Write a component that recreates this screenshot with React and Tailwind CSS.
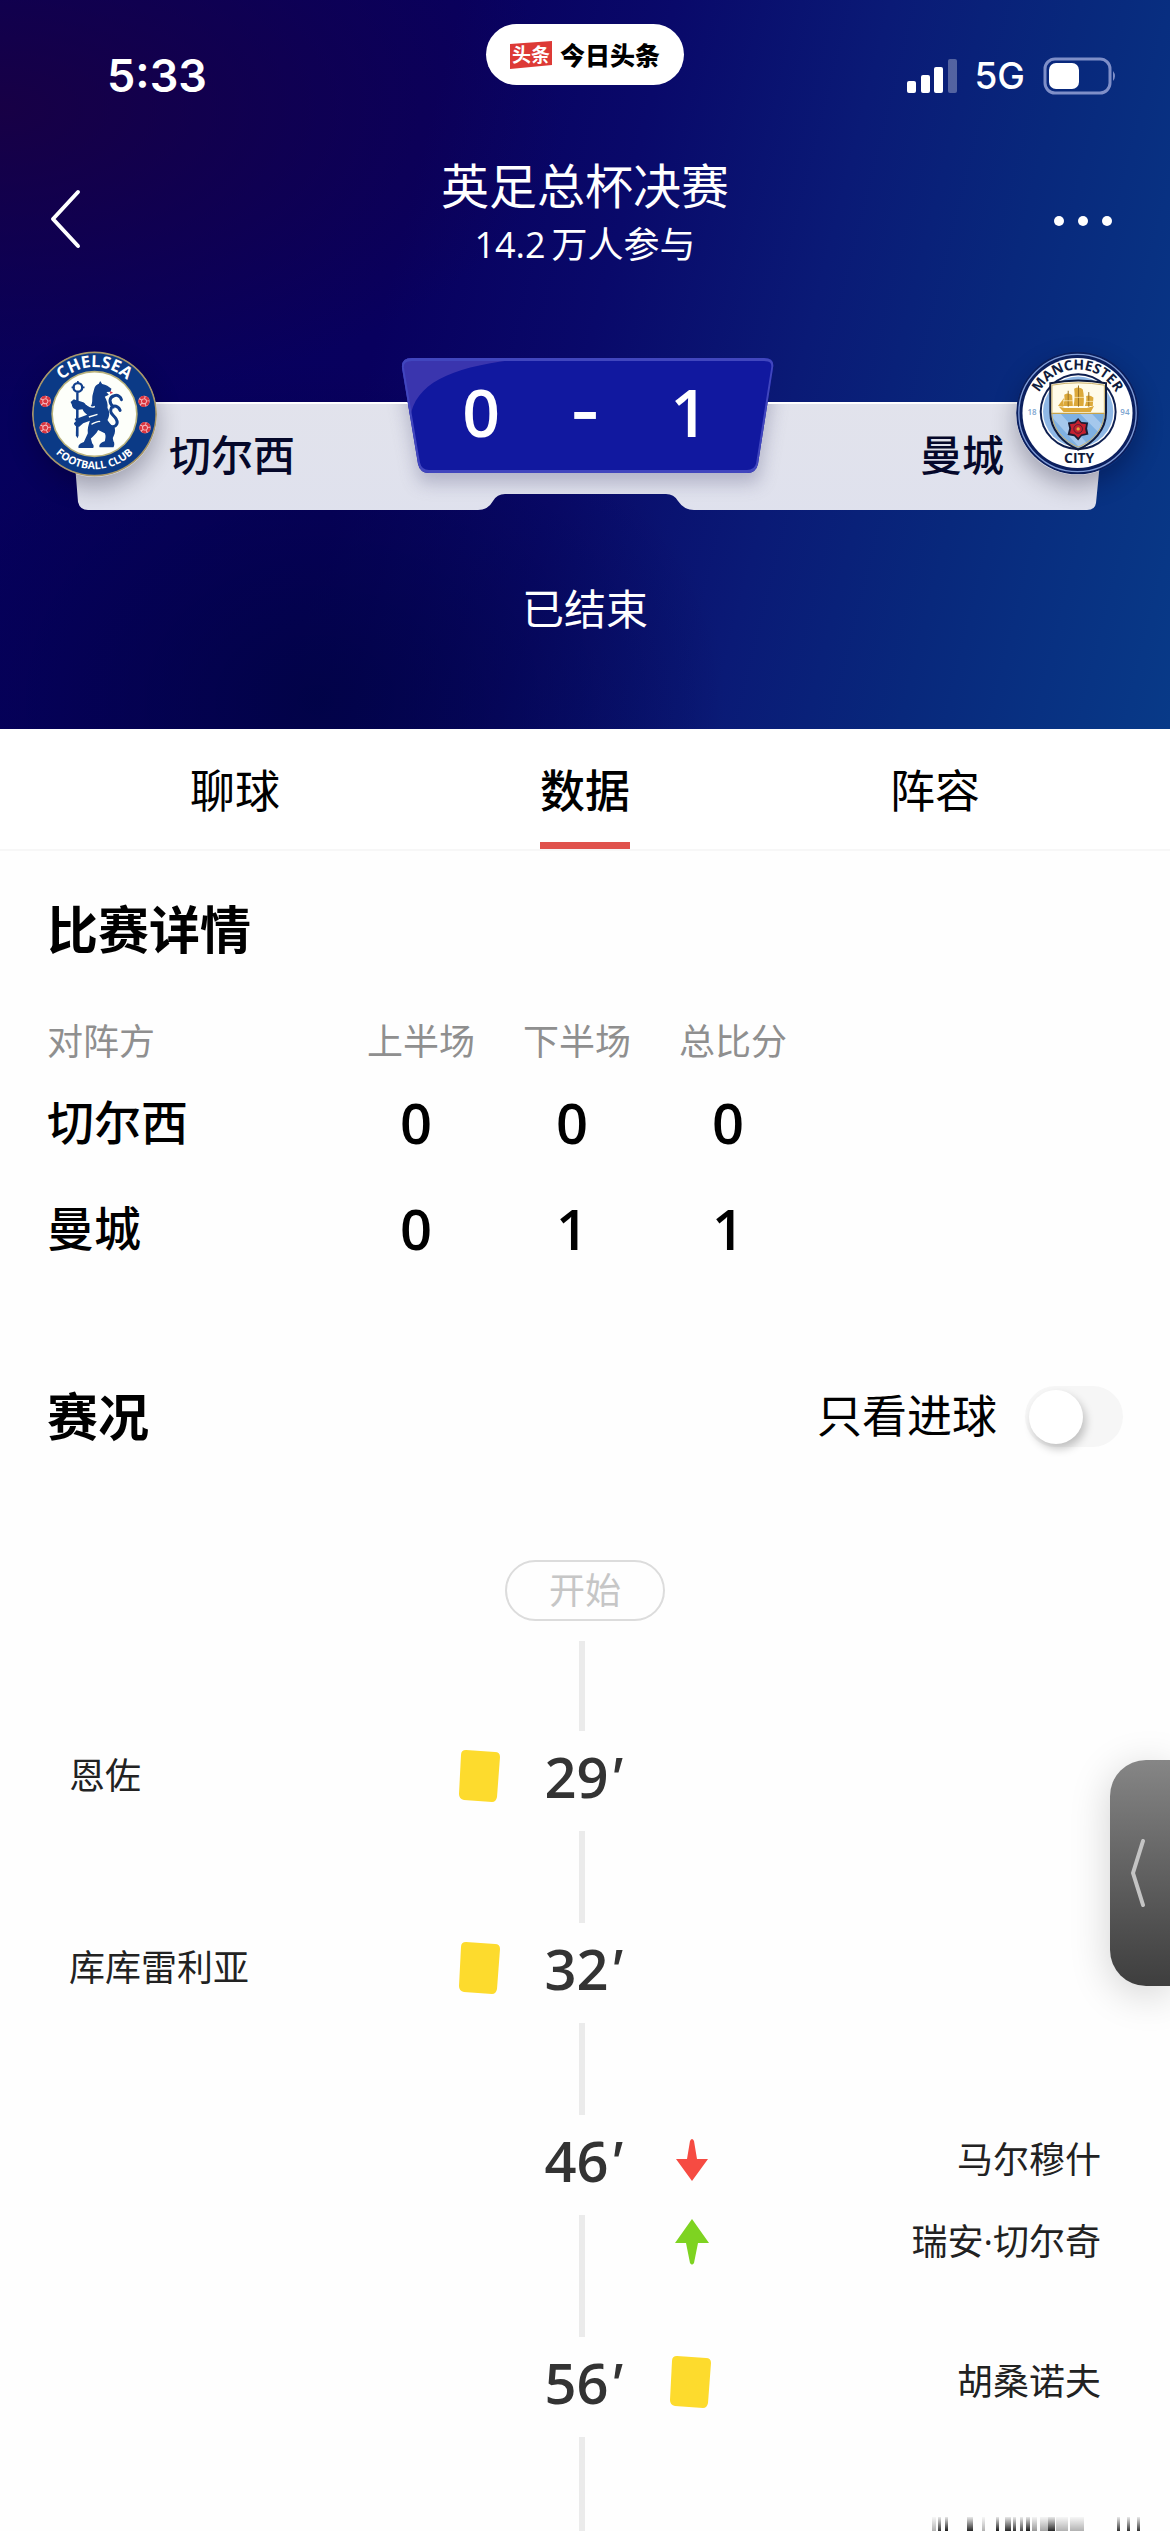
import { useState } from 'react';

const tabs = ['聊球', '数据', '阵容'];

const scores = [
  { team: '切尔西', first: 0, second: 0, total: 0 },
  { team: '曼城', first: 0, second: 1, total: 1 },
];

const events = [
  { minute: 29, side: 'home', players: [{ name: '恩佐', type: 'card' }], tail: 'h-[92px]' },
  { minute: 32, side: 'home', players: [{ name: '库库雷利亚', type: 'card' }], tail: 'h-[92px]' },
  {
    minute: 46,
    side: 'away',
    players: [
      { name: '马尔穆什', type: 'off' },
      { name: '瑞安·切尔奇', type: 'on' },
    ],
    tail: 'h-[122px]',
  },
  { minute: 56, side: 'away', players: [{ name: '胡桑诺夫', type: 'card' }], tail: 'h-[94px]' },
];

const ChelseaBadge = () => (
  <svg viewBox="35 28 376 378" className="w-[125px] h-[126px] rounded-full shadow-[0_10px_24px_rgba(0,0,30,0.3)]" role="img" aria-label="Chelsea">
    <defs>
      <path id="chelsea-top" d="M82 217a141 141 0 0 1 282 0" />
      <path id="chelsea-bottom" d="M57 217a166 166 0 0 0 332 0" />
    </defs>
    <circle cx="223" cy="217" r="188" fill="#a8976a" />
    <circle cx="223" cy="217" r="183" fill="#0b3a86" />
    <circle cx="223" cy="217" r="130" fill="#b9b27c" />
    <circle cx="223" cy="217" r="125" fill="#fdfffa" />
    <text fontFamily="Open Sans" fontWeight="700" fontSize="50" fill="#fff" textAnchor="middle">
      <textPath href="#chelsea-top" startOffset="50%">CHELSEA</textPath>
    </text>
    <text fontFamily="Open Sans" fontWeight="700" fontSize="32" fill="#fff" textAnchor="middle">
      <textPath href="#chelsea-bottom" startOffset="50%">FOOTBALL CLUB</textPath>
    </text>
    {[[75, 179], [75, 258], [372, 179], [375, 258]].map(([x, y]) => (
      <g key={`${x}-${y}`}>
        <circle cx={x} cy={y} r="17" fill="#f3b9bf" />
        <circle cx={x} cy={y} r="13" fill="none" stroke="#d9353f" strokeWidth="8" strokeDasharray="13 3" />
        <circle cx={x} cy={y} r="6" fill="#d9353f" />
      </g>
    ))}
    <g fill="#12408c">
      <path d="M168 152h7v130l-3 8-5-8z" />
      <path d="M222 142c2-10 8-14 14-16l4-8 6 9c12 2 20 8 28 14l-3 9-12 1 7 8-12 6c6 12 10 20 8 34 8 12 6 26 0 36 6 10 12 16 22 24 3 12-2 22-6 30l2 10c4 4 3 14 0 18h-42c-2-8 4-14 16-18 2-10 4-16 0-24l-20-10c-6 12-14 18-22 26l4 14c6 6 5 12 3 14h-44c-2-10 6-14 16-18l12-26c-2-14 2-24 6-38l-20 8-12 10c-8 2-14-2-16-10l6-6-4-8 12-2 26-10c-6-4-12-10-14-16l-16 2c-8-2-16-8-16-16l-4-8 10-8c14 6 30 6 36 16l12 6c10-8 6-24 8-34z" />
      <circle cx="173" cy="137" r="13" fill="none" stroke="#12408c" strokeWidth="7" />
      <path d="M173 118v9M154 137h9M183 137h10" stroke="#12408c" strokeWidth="5" />
      <path d="M262 250c24 14 34-4 26-18s-22-16-14-34c8-8 20-6 26 8M280 196c-16-14-12-30 2-34 12-4 20 4 22 12" fill="none" stroke="#12408c" strokeWidth="9" strokeLinecap="round" />
    </g>
    <path d="M202 190c8 6 16 8 22 4M206 226l26-8M214 248c10-4 20-12 26-8" stroke="#fdfffa" strokeWidth="4" fill="none" />
    <path d="M270 148l9 5-9 4z" fill="#dc3c50" />
  </svg>
);

const CityBadge = () => (
  <svg viewBox="31 36 370 374" className="w-[123px] h-[124px] rounded-full shadow-[0_10px_24px_rgba(0,0,30,0.3)]" role="img" aria-label="Manchester City">
    <defs>
      <path id="city-top" d="M85 223a131 131 0 0 1 262 0" />
      <clipPath id="city-shield">
        <path d="M134 133q84-16 168 0v88c0 54-40 94-84 112-44-18-84-58-84-112z" />
      </clipPath>
    </defs>
    <circle cx="216" cy="223" r="185" fill="#0b1f5e" />
    <circle cx="216" cy="223" r="177" fill="none" stroke="#7f9bd6" strokeWidth="4" />
    <circle cx="216" cy="223" r="166" fill="#fff" />
    <circle cx="218" cy="219" r="116" fill="#0e1f50" />
    <circle cx="218" cy="219" r="110" fill="#fff" />
    <circle cx="218" cy="219" r="106" fill="#8fb8e6" />
    <g clipPath="url(#city-shield)">
      <path fill="#fffbe9" d="M130 115h180v111H130z" />
      <path fill="#7fb1e2" d="M130 226h180v110H130z" />
      <path d="M130 226l100 110h34L166 226zM224 226l80 80v-34l-44-46z" fill="#a5c8ec" />
      <path d="M134 224h170" stroke="#c8a348" strokeWidth="4" />
    </g>
    <path d="M134 133q84-16 168 0v88c0 54-40 94-84 112-44-18-84-58-84-112z" fill="none" stroke="#101b3c" strokeWidth="6" />
    <path d="M139 139q79-14 158 0v82c0 50-38 88-79 105-41-17-79-55-79-105z" fill="none" stroke="#cdb06a" strokeWidth="3" />
    <g fill="#dca93a">
      <path d="M160 204l18 4h66l22-6-10 18h-82z" />
      <path d="M176 168c10-6 16-4 24 2l2 32h-30c4-10 6-20 4-34zM206 150c10-6 18-4 26 2 4 18 4 34 2 50h-30c4-18 4-34 2-52zM242 172c8-4 14-2 22 4l-2 26h-24c4-10 6-20 4-30z" />
      <path d="M157 202l18-24-2 26z" />
    </g>
    <path d="M188 156v48M219 140v64M250 160v44" stroke="#9a7424" strokeWidth="3" />
    <path d="M172 186h30M204 176h32M240 188h24" stroke="#fff3cf" strokeWidth="2" />
    <path d="M218 238l10 12 20 2-3 18 4 18-20 4-11 14-12-13-20-4 5-19-4-18 20-3z" fill="#1c1d33" />
    <path d="M218 244l9 11 15 2-3 14 3 13-15 4-9 10-10-10-15-4 4-14-4-13 16-2z" fill="#c4202f" />
    <circle cx="218" cy="271" r="13" fill="none" stroke="#1c1d33" strokeWidth="2" />
    <circle cx="218" cy="271" r="5" fill="#e4a23c" />
    <g fontFamily="Open Sans" fontWeight="700" fill="#101b3c" textAnchor="middle">
      <text fontSize="42">
        <textPath href="#city-top" startOffset="50%">MANCHESTER</textPath>
      </text>
      <text x="221" y="375" fontSize="42">CITY</text>
    </g>
    <g fontFamily="Open Sans" fontWeight="600" fontSize="24" fill="#7ba3cf" textAnchor="middle">
      <text x="79" y="228">18</text>
      <text x="359" y="228">94</text>
    </g>
  </svg>
);

const StatusBar = () => (
  <div className="grid grid-cols-3 items-start px-[61px] pt-6">
    <span className="pl-[46px] pt-6 text-[45px] leading-[56px] font-semibold font-['Inter',sans-serif]">5:33</span>
    <div className="flex h-[61px] w-[198px] items-center justify-center gap-2 justify-self-center rounded-full bg-white">
      <svg viewBox="0 0 42 28" className="h-7 w-[42px]">
        <path d="M0 3L42 0V24L0 28z" fill="#dd3a36" />
        <text x="21" y="21" fontSize="19" fontWeight="700" fill="#fff" textAnchor="middle" fontFamily="Noto Sans CJK SC">头条</text>
      </svg>
      <span className="text-[25px] leading-[28px] font-black text-black">今日头条</span>
    </div>
    <div className="-mr-2 flex items-center justify-end pt-[31px]">
      <svg viewBox="0 0 50 36" className="mr-[17px] h-9 w-[50px] fill-white">
        <rect x="0" y="23" width="9" height="12" rx="2" />
        <rect x="14" y="17" width="9" height="18" rx="2" />
        <rect x="27" y="9" width="9" height="26" rx="2" />
        <rect x="41" y="1" width="9" height="34" rx="2" opacity="0.3" />
      </svg>
      <span className="mr-[18px] text-[37px] leading-[42px] font-medium font-['Inter',sans-serif]">5G</span>
      <svg viewBox="0 0 74 38" className="h-[38px] w-[74px]">
        <rect x="2" y="2" width="65" height="34" rx="10" fill="none" stroke="#7f8fc8" strokeWidth="3" />
        <rect x="6" y="6" width="30" height="26" rx="7" fill="#fff" />
        <path d="M70 14q4 5 0 10z" fill="#7f8fc8" />
      </svg>
    </div>
  </div>
);

const ScoreBoard = () => (
  <div className="relative mt-[75px] h-[170px]">
    <svg viewBox="0 0 1170 170" preserveAspectRatio="none" className="absolute inset-0 h-full w-full" aria-hidden="true">
      <defs>
        <linearGradient id="board" x1="0" y1="0" x2="0" y2="1">
          <stop offset="0" stopColor="#e2e3ec" />
          <stop offset="1" stopColor="#dfe1ed" />
        </linearGradient>
        <filter id="soft" x="-20%" y="-20%" width="140%" height="160%">
          <feGaussianBlur stdDeviation="9" />
        </filter>
        <clipPath id="board-clip">
          <path d="M70 55H1106L1096 156q-1 7-9 7H694q-10 0-16-9-4-7-12-7H505q-8 0-12 7-5 9-15 9H88q-8 0-10-8z" />
        </clipPath>
        <clipPath id="score-clip">
          <path d="M412 11H764q11 0 9 10L758 117q-2 9-11 9H429q-9 0-11-9L402 21q-1-10 10-10z" />
        </clipPath>
      </defs>
      <g clipPath="url(#board-clip)">
        <path fill="url(#board)" d="M60 50h1056v120H60z" />
        <path d="M400 30H776L758 136H420z" fill="#6a6c90" opacity="0.4" filter="url(#soft)" />
        <path d="M70 56H1106" stroke="#fff" strokeWidth="2" />
      </g>
      <g clipPath="url(#score-clip)">
        <path fill="#11189f" d="M400 11h376v116H400z" />
        <path d="M400 11H530C460 18 415 32 410 72z" fill="#3a35ae" />
        <path d="M412 12H764q11 0 9 10L758 117q-2 8-11 8H429q-9 0-11-9L402 21q-1-9 10-9z" fill="none" stroke="#4146be" strokeWidth="4" />
      </g>
    </svg>
    <div className="relative flex items-start justify-between pt-1 pr-[31px] pl-8">
      <div className="flex">
        <ChelseaBadge />
        <span className="ml-3 pt-[78px] text-[42px] leading-[52px] font-medium text-[#05082a]">切尔西</span>
      </div>
      <div className="flex">
        <span className="mr-3 pt-[78px] text-[42px] leading-[52px] font-medium text-[#05082a]">曼城</span>
        <CityBadge />
      </div>
    </div>
    <div className="absolute inset-x-0 top-6 grid grid-cols-[104px_104px_104px] justify-center text-center font-['Open_Sans',sans-serif] text-[66px] leading-[80px] font-semibold">
      <span>0</span>
      <span className="font-['Inter',sans-serif]">-</span>
      <span>1</span>
    </div>
  </div>
);

const EventIcon = ({ type }) => {
  if (type === 'card') {
    return (
      <svg viewBox="0 0 41 54" className="h-[54px] w-[41px] shrink-0" aria-label="黄牌">
        <path d="M7 1L36 3q5 0 5 5L38 48q-1 5-5 5L5 51q-5-1-5-6L2 6q0-5 5-5z" fill="#fddb2d" />
      </svg>
    );
  }
  return (
    <svg viewBox="0 0 41 46" className="h-[46px] w-[41px] shrink-0" aria-label={type === 'on' ? '换上' : '换下'}>
      {type === 'on' ? (
        <path d="M22 0L39 24H28L24 44q-2 3-4 0L16 24H5z" fill="#7ed321" />
      ) : (
        <path d="M20 4q2-4 4 0l3 18h11L22 44 6 22h11z" fill="#f64b42" />
      )}
    </svg>
  );
};

const Player = ({ player, side }) => (
  <div className={`flex w-full items-center justify-between ${side === 'home' ? 'col-start-1' : 'col-start-3 flex-row-reverse'}`}>
    <span className="text-[36px] leading-[54px] text-[#222]">{player.name}</span>
    <EventIcon type={player.type} />
  </div>
);

const TimelineEvent = ({ event }) => {
  const [main, extra] = event.players;
  return (
    <li>
      <div className="grid h-[100px] grid-cols-[1fr_170px_1fr] items-center pb-2.5">
        <Player player={main} side={event.side} />
        <time className="col-start-2 row-start-1 pr-1 text-center font-['Open_Sans',sans-serif] text-[56px] leading-[60px] font-semibold text-[#333]">
          {event.minute}
          <span className="italic">'</span>
        </time>
      </div>
      <div className={`grid grid-cols-[1fr_170px_1fr] items-start ${event.tail}`}>
        <span className="col-start-2 row-start-1 mr-1.5 h-full w-1.5 justify-self-center bg-[#ebebeb]" />
        {extra && <Player player={extra} side={event.side} />}
      </div>
    </li>
  );
};

// top edge of the next row of the feed, cut by the screen
const peekBars = [[4, 4, 0.3], [10, 3, 0.8], [17, 3, 0.9], [39, 6, 0.85], [54, 3, 0.3], [68, 3, 0.9], [77, 6, 0.85], [85, 3, 0.8], [92, 3, 0.7], [98, 4, 0.9], [104, 5, 0.4], [112, 8, 0.35], [120, 7, 0.85], [128, 12, 0.3], [142, 14, 0.3], [189, 3, 0.8], [199, 3, 0.8], [209, 3, 0.8]];

export default function App() {
  const [active, setActive] = useState('数据');
  const [goalsOnly, setGoalsOnly] = useState(false);

  return (
    <div className="relative w-full overflow-hidden bg-[#fefefe] font-['Open_Sans','Noto_Sans_CJK_SC',sans-serif] text-black">
      <header className="h-[729px] bg-[radial-gradient(ellipse_at_27%_96%,rgba(0,3,68,0.85)_0%,rgba(0,3,68,0)_34%),radial-gradient(ellipse_at_0%_15%,rgba(28,0,64,0.8)_0%,rgba(20,0,70,0)_34%),linear-gradient(104deg,#05005c_0%,#08005e_34%,#09096a_50%,#0a1a76_66%,#08287c_80%,#083a88_100%)] text-white">
        <StatusBar />
        <div className="grid grid-cols-[1fr_auto_1fr] items-center px-[50px] pt-[50px]">
          <button type="button" aria-label="返回" className="justify-self-start pt-3">
            <svg viewBox="0 0 32 60" className="h-[60px] w-8" fill="none" stroke="#fff" strokeWidth="4" strokeLinecap="round" strokeLinejoin="round">
              <path d="M28 3L3 30l25 27" />
            </svg>
          </button>
          <div className="text-center">
            <h1 className="text-[48px] leading-[64px] font-normal">英足总杯决赛</h1>
            <p className="text-[36px] leading-[54px]">
              <span className="mr-1.5">14.2</span>万人参与
            </p>
          </div>
          <button type="button" aria-label="更多" className="justify-self-end pt-4 pr-1.5">
            <svg viewBox="0 0 62 12" className="h-3 w-[62px]" fill="#fff">
              <circle cx="7" cy="6" r="5" />
              <circle cx="31" cy="6" r="5" />
              <circle cx="55" cy="6" r="5" />
            </svg>
          </button>
        </div>
        <ScoreBoard />
        <p className="mt-[62px] text-center text-[42px] leading-[60px]">已结束</p>
      </header>

      <nav className="grid h-[122px] grid-cols-3 border-b-2 border-[#f7f7f7] bg-white px-[60px]">
        {tabs.map((tab) => (
          <button
            key={tab}
            type="button"
            onClick={() => setActive(tab)}
            className={`justify-self-center border-b-7 pt-2.5 text-[45px] leading-[60px] ${
              active === tab ? 'border-[#e0524c] font-medium' : 'border-transparent font-normal'
            }`}
          >
            {tab}
          </button>
        ))}
      </nav>

      <section className="h-[500px] px-[47px] pt-[42px]">
        <h2 className="text-[51px] leading-[72px] font-bold">比赛详情</h2>
        <table className="mt-[50px] table-fixed border-collapse">
          <thead>
            <tr className="h-[54px] text-[36px] leading-[54px] text-[#8f8f8f]">
              <th className="w-[296px] p-0 text-left font-normal">对阵方</th>
              <th className="w-[156px] p-0 font-normal">上半场</th>
              <th className="w-[156px] p-0 font-normal">下半场</th>
              <th className="w-[156px] p-0 font-normal">总比分</th>
            </tr>
          </thead>
          <tbody>
            {scores.map((row) => (
              <tr key={row.team} className="h-[106px] text-center text-[56px] leading-[72px] font-semibold">
                <th className="p-0 text-left text-[47px] font-medium">{row.team}</th>
                <td className="p-0 pr-2.5">{row.first}</td>
                <td className="p-0 pr-2.5">{row.second}</td>
                <td className="p-0 pr-2.5">{row.total}</td>
              </tr>
            ))}
          </tbody>
        </table>
      </section>

      <section className="px-[47px] pt-[29px]">
        <div className="flex items-center justify-between">
          <h2 className="text-[51px] leading-[72px] font-bold">赛况</h2>
          <label className="flex cursor-pointer items-center gap-7 text-[45px] leading-[68px]">
            只看进球
            <input type="checkbox" className="peer sr-only" checked={goalsOnly} onChange={(e) => setGoalsOnly(e.target.checked)} />
            <span className="flex h-[61px] w-[98px] items-start rounded-full bg-[#f6f6f6] p-1 peer-checked:justify-end peer-checked:bg-[#e0524c]">
              <span className="h-[54px] w-[54px] rounded-full bg-white shadow-[3px_5px_8px_rgba(0,0,0,0.22)]" />
            </span>
          </label>
        </div>
      </section>

      <section className="px-[69px] pt-[108px]">
        <div className="flex flex-col items-center">
          <span className="rounded-full border-2 border-[#dcdcdc] px-[42px] text-[36px] leading-[57px] text-[#c6c6c6]">开始</span>
          <span className="mt-5 mr-1.5 h-[90px] w-1.5 bg-[#ebebeb]" />
        </div>
        <ol>
          {events.map((event) => (
            <TimelineEvent key={event.minute} event={event} />
          ))}
        </ol>
      </section>

      <button
        type="button"
        aria-label="展开"
        className="absolute top-[1760px] right-0 flex h-[226px] w-[60px] items-center rounded-l-[36px] bg-linear-to-b from-[#868686] to-[#3e3e3e] pl-5 shadow-[0_8px_40px_rgba(0,0,0,0.18)]"
      >
        <svg viewBox="0 0 16 68" className="h-[68px] w-4" fill="none" stroke="#c4c4c4" strokeWidth="4" strokeLinecap="round" strokeLinejoin="round">
          <path d="M13 2L3 34l10 32" />
        </svg>
      </button>

      <svg viewBox="0 0 214 14" className="absolute right-7 bottom-0 h-3.5 w-[214px]" aria-hidden="true">
        <defs>
          <linearGradient id="peek" x1="0" y1="0" x2="0" y2="1">
            <stop offset="0" stopColor="#000" stopOpacity="0.1" />
            <stop offset="1" stopColor="#000" />
          </linearGradient>
        </defs>
        {peekBars.map(([x, w, opacity]) => (
          <rect key={x} x={x} y="0" width={w} height="14" fill="url(#peek)" opacity={opacity} />
        ))}
      </svg>
    </div>
  );
}
